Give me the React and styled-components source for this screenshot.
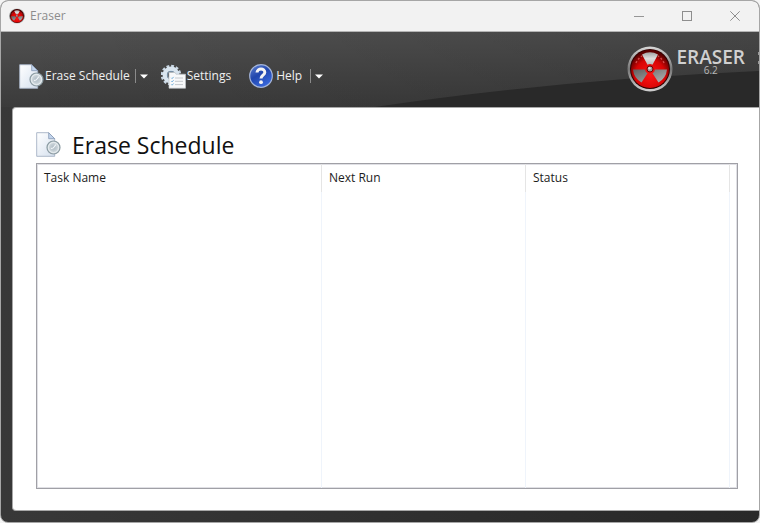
import React from "react";
import styled, { createGlobalStyle } from "styled-components";

const GlobalStyle = createGlobalStyle`
  * { box-sizing: border-box; }
  body {
    margin: 0;
    background: #f4f4f4;
    font-family: "Open Sans", "Noto Sans", sans-serif;
    font-size: 12px;
    line-height: 16px;
    color: #1c1c1c;
  }
  button { font: inherit; color: inherit; background: none; border: 0; padding: 0; }
`;

const Window = styled.div`
  display: flex;
  flex-direction: column;
  min-height: 100vh;
  border: 1px solid #a6a6a6;
  border-radius: 8px;
  overflow: hidden;
  background: linear-gradient(90deg, #383838, #282828);
`;

const TitleBar = styled.header`
  display: flex;
  align-items: center;
  height: 31px;
  padding-left: 8px;
  background: #f2f2f2;
  border-bottom: 1px solid #b4b4b4;
  color: #8c8c8c;
`;

const Title = styled.span`
  flex: 1;
  margin-left: 5px;
`;

const CaptionButton = styled.button`
  display: grid;
  place-items: center;
  width: 48px;
  height: 30px;
`;

const Banner = styled.div`
  position: relative;
  display: flex;
  align-items: flex-start;
  height: 75px;
  background: linear-gradient(#505050, #3b3b3b);
`;

const Backdrop = styled.svg`
  position: absolute;
  inset: 0;
  width: 100%;
  height: 100%;
`;

const Toolbar = styled.nav`
  position: relative;
  flex: 1;
  display: flex;
  align-items: center;
  padding: 32px 0 0 18px;
  color: #f0f0f0;
`;

const ToolGroup = styled.div`
  display: flex;
  align-items: center;
  margin-right: ${(p) => p.$gap || 0}px;
`;

const ToolButton = styled.button`
  display: flex;
  align-items: center;
  gap: ${(p) => p.$gap || 1}px;
  height: 24px;
  white-space: nowrap;
`;

const DropButton = styled.button`
  display: flex;
  align-items: center;
  height: 14px;
  margin-left: ${(p) => p.$gap}px;
  padding-left: 4px;
  border-left: 1px solid #8b8b8b;
`;

const Brand = styled.div`
  position: relative;
  display: flex;
  gap: 4px;
  padding: 14px 14px 0 0;
`;

const BrandText = styled.div`
  display: flex;
  flex-direction: column;
  align-items: center;
  padding-top: 2px;
  color: #d0d0d0;
`;

const BrandName = styled.span`
  font-size: 19px;
  font-weight: 600;
  line-height: 18px;
`;

const BrandVersion = styled.span`
  font-size: 10px;
  line-height: 8px;
  color: #b8b8b8;
`;

const Panel = styled.main`
  flex: 1;
  display: flex;
  flex-direction: column;
  margin: 0 0 11px 11px;
  padding: 20px 21px 21px 23px;
  background: #fff;
  border: 1px solid #a8a8a8;
  border-right: 0;
  border-radius: 4px 0 0 4px;
`;

const HeadingRow = styled.div`
  display: flex;
  align-items: flex-start;
  gap: 11px;
  height: 35px;
  padding-top: 4px;
`;

const Heading = styled.h1`
  margin: 0;
  font-size: 23px;
  line-height: 26px;
  font-weight: 400;
  color: #111;
`;

const ListBox = styled.div`
  flex: 1;
  display: flex;
  border: 1px solid #a0a0a6;
  box-shadow: inset 0 0 0 1px #e0e0e5;
`;

const TaskTable = styled.table`
  width: 100%;
  table-layout: fixed;
  border-collapse: separate;
  border-spacing: 0;
`;

const Column = styled.col`
  width: ${(p) => (p.$width ? `${p.$width}px` : "auto")};
`;

const HeaderCell = styled.th`
  height: 28px;
  padding: 0 0 0 7px;
  text-align: left;
  font-weight: 400;
  border-right: 1px solid #e5e5e5;
`;

const BodyCell = styled.td`
  padding: 0;
  border-right: 1px solid #eff4fb;
`;

const Filler = styled.td`
  padding: 0;
`;

function EraserLogo({ size }) {
  return (
    <svg width={size} height={size} viewBox="0 0 46 46" aria-hidden="true">
      <defs>
        <linearGradient id={`rim${size}`} x1="0" y1="0" x2="0" y2="1">
          <stop offset="0" stopColor="#d8d8d8" />
          <stop offset="0.5" stopColor="#777" />
          <stop offset="1" stopColor="#d0d0d0" />
        </linearGradient>
        <radialGradient id={`red${size}`} cx="0.5" cy="0.65" r="0.6">
          <stop offset="0" stopColor="#ff1515" />
          <stop offset="0.65" stopColor="#d80505" />
          <stop offset="1" stopColor="#5a0000" />
        </radialGradient>
        <linearGradient id={`top${size}`} x1="0" y1="0" x2="0" y2="1">
          <stop offset="0" stopColor="#a5a5a5" />
          <stop offset="0.5" stopColor="#dedede" />
          <stop offset="1" stopColor="#b8b8b8" />
        </linearGradient>
        <linearGradient id={`side${size}`} x1="0" y1="0" x2="1" y2="1">
          <stop offset="0" stopColor="#606060" />
          <stop offset="1" stopColor="#b5b5b5" />
        </linearGradient>
      </defs>
      <circle cx="23" cy="23" r="22.5" fill={`url(#rim${size})`} />
      <circle cx="23" cy="23" r="20" fill="#300" />
      <circle cx="23" cy="23" r="19" fill={`url(#red${size})`} />
      <path fill={`url(#top${size})`} d="M20.5 18.7 15 8.5A17 17 0 0 1 31 8.5L25.5 18.7A5 5 0 0 0 20.5 18.7Z" />
      <path fill={`url(#side${size})`} d="M18 23.5H6A17 17 0 0 0 14.5 36.5L20.5 27.3A5 5 0 0 1 18 23.5ZM28 23.5H40A17 17 0 0 1 31.5 36.5L25.5 27.3A5 5 0 0 0 28 23.5Z" />
      <path d="M9 17A16 16 0 0 1 15 10M37 17A16 16 0 0 0 31 10" fill="none" stroke="#ff8585" strokeWidth="1.5" strokeDasharray="2 2" opacity=".55" />
      <circle cx="23" cy="23" r="3" fill="#999" stroke="#700" />
      <circle cx="22.5" cy="22.2" r="1.2" fill="#ddd" />
    </svg>
  );
}

function ScheduleIcon({ size, id }) {
  return (
    <svg width={size} height={size} viewBox="0 0 25 25" aria-hidden="true">
      <defs>
        <linearGradient id={`${id}Page`} x1="0" y1="0" x2="1" y2="1">
          <stop offset="0" stopColor="#fff" />
          <stop offset="1" stopColor="#d5e0ee" />
        </linearGradient>
        <radialGradient id={`${id}Clock`}>
          <stop offset="0" stopColor="#aebbc4" />
          <stop offset="1" stopColor="#d9e0e3" />
        </radialGradient>
      </defs>
      <path d="M.7.7h12l6 6v17.6H.7z" fill={`url(#${id}Page)`} stroke="#a5b1c4" strokeWidth=".9" />
      <path d="M12.7.7v6h6z" fill="#c2d4ec" stroke="#8698b4" strokeWidth=".8" />
      <circle cx="17.5" cy="15.5" r="6.5" fill={`url(#${id}Clock)`} stroke="#8b9ba2" strokeWidth="1.2" />
      <circle cx="17.5" cy="15.5" r="5" fill="none" stroke="#eef3f5" strokeWidth=".8" />
      <path d="M17.2 16 20 12.5M17.2 16 15 16.5" stroke="#f4f8fa" strokeWidth="1.2" />
    </svg>
  );
}

function SettingsIcon() {
  return (
    <svg width="25" height="25" viewBox="0 0 25 25" aria-hidden="true">
      <circle cx="10" cy="11" r="9" fill="none" stroke="#c9d7e4" strokeWidth="2.6" strokeDasharray="2.8 1.9" />
      <circle cx="10" cy="11" r="6.2" fill="none" stroke="#d9e5ef" strokeWidth="4.4" />
      <circle cx="10" cy="11" r="3.8" fill="#444" stroke="#8fb3d2" strokeWidth=".8" />
      <path d="M8 8.5h6l1 1.7h9.5v14H8z" fill="#f8f9fa" stroke="#bec4c9" strokeWidth=".7" />
      <path d="M14 14h8M14 17.3h8M14 20.6h8" stroke="#c4c8cd" strokeWidth="1" />
      <path d="m10.3 13.8.8.8 1.5-1.7M10.3 17.1l.8.8 1.5-1.7M10.3 20.4l.8.8 1.5-1.7" fill="none" stroke="#62a7d8" strokeWidth=".9" />
    </svg>
  );
}

function HelpIcon() {
  return (
    <svg width="24" height="24" viewBox="0 0 24 24" aria-hidden="true">
      <defs>
        <linearGradient id="helpBlue" x1="0" y1="0" x2=".6" y2="1">
          <stop offset="0" stopColor="#6385d3" />
          <stop offset=".5" stopColor="#2146ad" />
          <stop offset="1" stopColor="#3868dd" />
        </linearGradient>
      </defs>
      <circle cx="12" cy="12" r="11.3" fill="url(#helpBlue)" stroke="#a3b4d8" strokeWidth="1.2" />
      <path d="M8 8.5C8.2 3.8 16 4 15.8 8.5 15.6 11.2 12 11.3 12 14.6" fill="none" stroke="#f4f4f4" strokeWidth="3" />
      <circle cx="12" cy="18.2" r="1.9" fill="#f4f4f4" />
    </svg>
  );
}

function DropDown({ label, gap }) {
  return (
    <DropButton aria-label={label} $gap={gap}>
      <svg width="8" height="5" viewBox="0 0 8 5"><path d="M0 .5h8L4 4.5z" fill="#fff" /></svg>
    </DropButton>
  );
}

export default function App() {
  return (
    <>
      <GlobalStyle />
      <Window>
        <TitleBar>
          <EraserLogo size={16} />
          <Title>Eraser</Title>
          <CaptionButton aria-label="Minimize">
            <svg width="10" height="10"><path d="M0 5.5h10" stroke="#969696" /></svg>
          </CaptionButton>
          <CaptionButton aria-label="Maximize">
            <svg width="10" height="10"><rect x=".5" y=".5" width="9" height="9" fill="none" stroke="#8e8e8e" /></svg>
          </CaptionButton>
          <CaptionButton aria-label="Close">
            <svg width="10" height="10"><path d="M.3.3l9.4 9.4M9.7.3.3 9.7" stroke="#8e8e8e" /></svg>
          </CaptionButton>
        </TitleBar>
        <Banner>
          <Backdrop viewBox="0 0 758 75" preserveAspectRatio="none" aria-hidden="true">
            <defs>
              <linearGradient id="shade">
                <stop offset="0" stopColor="#000" stopOpacity="0" />
                <stop offset="1" stopColor="#000" stopOpacity=".13" />
              </linearGradient>
            </defs>
            <path d="M0 0h758v75H0z" fill="url(#shade)" />
            <path d="M374 75Q555 48 758 39V75z" fill="#292929" />
            <path d="M757 20h1v3h-1zM757 29h1v3h-1z" fill="#999" />
          </Backdrop>
          <Toolbar>
            <ToolGroup $gap={13}>
              <ToolButton><ScheduleIcon size={25} id="tool" />Erase Schedule</ToolButton>
              <DropDown label="Erase Schedule options" gap={5} />
            </ToolGroup>
            <ToolGroup $gap={18}>
              <ToolButton><SettingsIcon />Settings</ToolButton>
            </ToolGroup>
            <ToolGroup>
              <ToolButton $gap={3}><HelpIcon />Help</ToolButton>
              <DropDown label="Help options" gap={8} />
            </ToolGroup>
          </Toolbar>
          <Brand>
            <EraserLogo size={46} />
            <BrandText>
              <BrandName>ERASER</BrandName>
              <BrandVersion>6.2</BrandVersion>
            </BrandText>
          </Brand>
        </Banner>
        <Panel>
          <HeadingRow>
            <ScheduleIcon size={25} id="page" />
            <Heading>Erase Schedule</Heading>
          </HeadingRow>
          <ListBox>
            <TaskTable>
              <colgroup>
                <Column />
                <Column $width={204} />
                <Column $width={204} />
                <Column $width={7} />
              </colgroup>
              <thead>
                <tr>
                  <HeaderCell scope="col">Task Name</HeaderCell>
                  <HeaderCell scope="col">Next Run</HeaderCell>
                  <HeaderCell scope="col">Status</HeaderCell>
                  <Filler />
                </tr>
              </thead>
              <tbody>
                <tr>
                  <BodyCell />
                  <BodyCell />
                  <BodyCell />
                  <Filler />
                </tr>
              </tbody>
            </TaskTable>
          </ListBox>
        </Panel>
      </Window>
    </>
  );
}
